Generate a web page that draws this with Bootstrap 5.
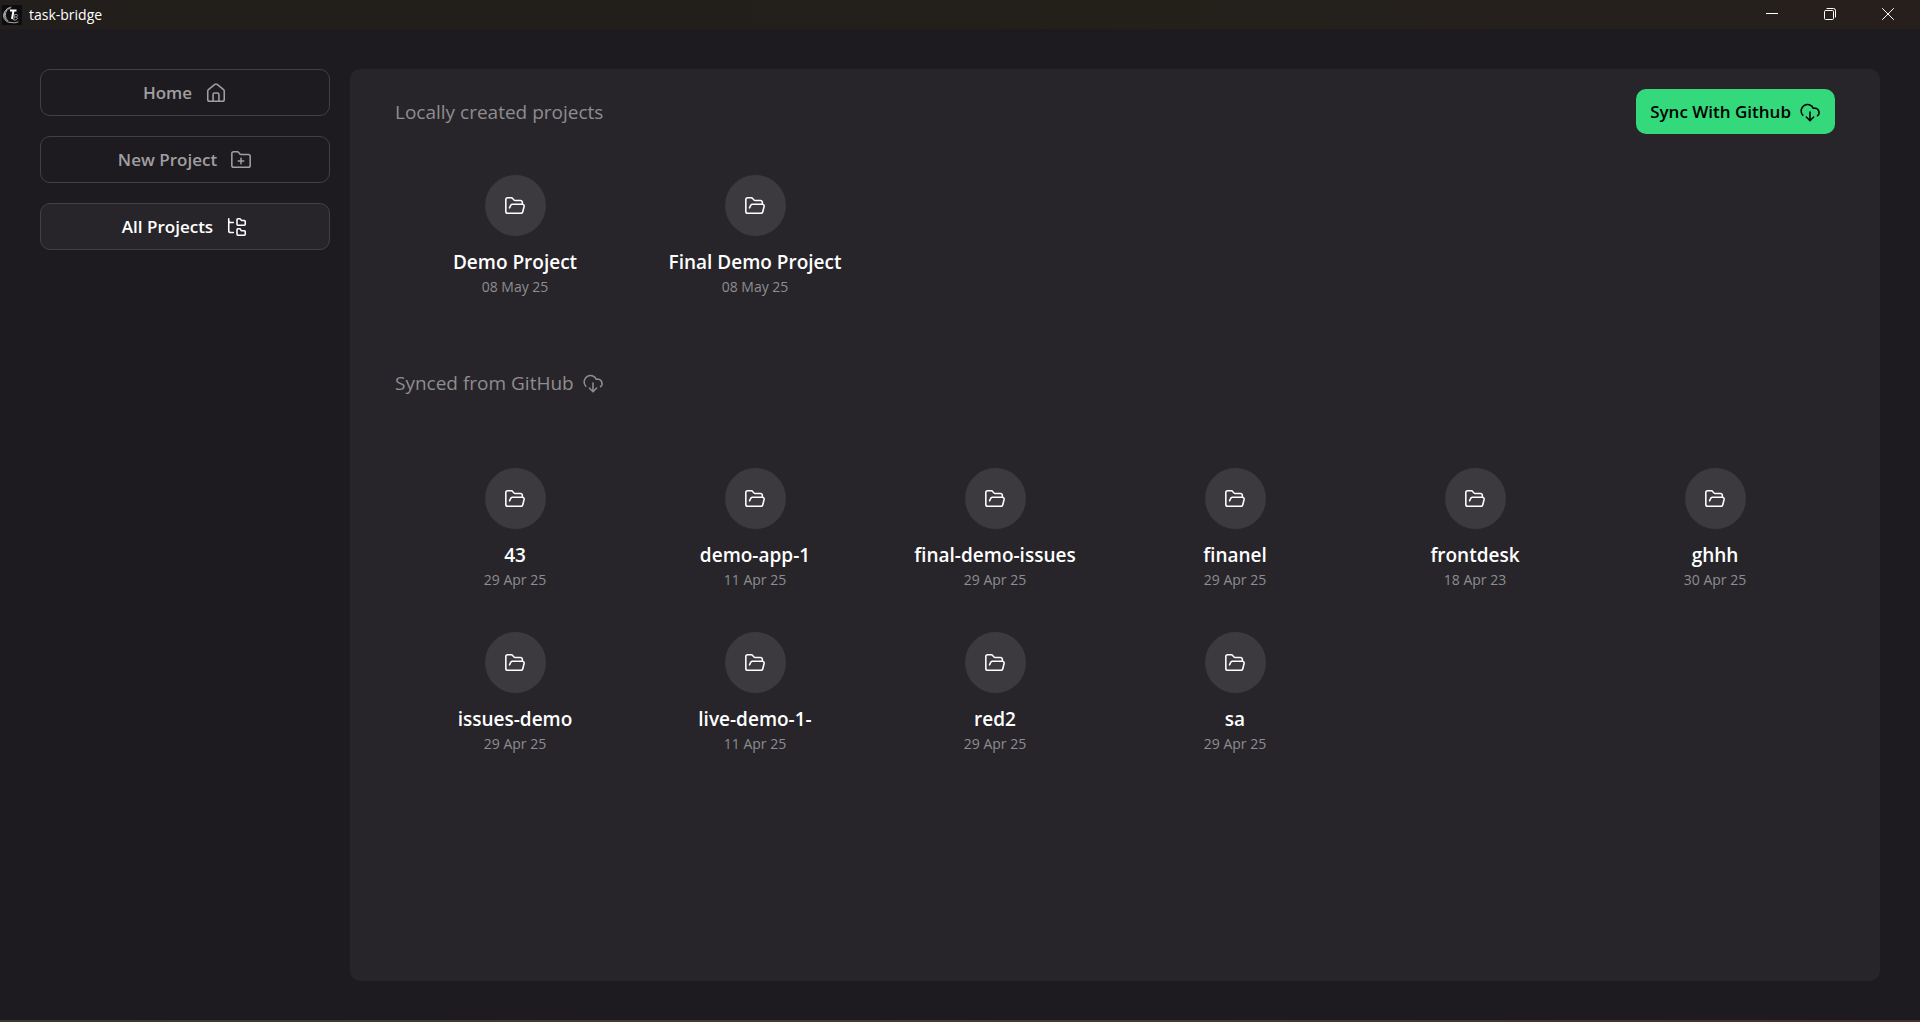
<!DOCTYPE html>
<html lang="en">
<head>
<meta charset="utf-8">
<meta name="viewport" content="width=device-width, initial-scale=1">
<title>task-bridge</title>
<link rel="stylesheet" href="https://cdn.jsdelivr.net/npm/bootstrap@5.3.0/dist/css/bootstrap.min.css">
<style>
  body { background: #1d1b1f; color: #fff; font-family: "Open Sans", "Noto Sans", sans-serif; }
  .titlebar { height: 29px; padding: 0 3px 0 2px; background: linear-gradient(90deg, #211e1b, #23201a 60%, #261f1c); font-size: 14px; line-height: 20px; }
  .app-name { margin-left: 7px; }
  .win-btn { width: 58px; height: 28px; background: none; border: 0; padding: 0; color: #fff; }
  .win-btn svg { stroke-width: 1; display: block; margin: 0 auto; }
  .workspace { padding: 40px 40px 39px; gap: 20px; }
  .sidebar { width: 290px; gap: 20px; }
  .side-link { height: 47px; border: 1px solid #424045; border-radius: 10px; color: #a09f9f; font-size: 17px; line-height: 24px; font-weight: 600; gap: 13px; text-decoration: none; }
  .side-link:hover { color: #fff; }
  .side-link.current { background: #27252a; color: #fff; }
  .panel { background: #27252a; border-radius: 10px; padding: 20px 45px; }
  .section-title { color: #8e8d8f; font-size: 19px; line-height: 28px; font-weight: 400; margin: 0; }
  .sync-btn { height: 45px; background: #33d97a; border: 0; border-radius: 10px; color: #000; font-size: 17px; line-height: 24px; font-weight: 600; padding: 0 14px; gap: 8px; }
  .tiles { padding-top: 41px; row-gap: 42px; }
  .tile { color: #fff; text-decoration: none; }
  .disc { width: 61px; height: 61px; border-radius: 50%; background: #3c3a3f; margin-bottom: 12px; }
  .tile-name { font-size: 19px; line-height: 28px; font-weight: 600; }
  .tile-date { color: #8e8d8f; font-size: 14px; line-height: 21px; }
  .synced { padding-top: 72px; }
  .synced + .tiles { padding-top: 71px; }
  .base-line { height: 2px; background: linear-gradient(90deg, #3a3a2e, #4a3a34 50%, #4a2f2c); }
  svg { fill: none; stroke: currentColor; stroke-width: 1.7; stroke-linecap: round; stroke-linejoin: round; flex: none; }
</style>
<script src="https://cdn.jsdelivr.net/npm/bootstrap@5.3.0/dist/js/bootstrap.bundle.min.js"></script>
</head>
<body>
<svg class="d-none" aria-hidden="true">
  <symbol id="i-home" viewBox="0 0 24 24"><path d="M3 9.800a2 2 0 0 1 .75-1.560L10.750 2.700a2 2 0 0 1 2.500 0l7 5.540A2 2 0 0 1 21 9.800V19a2 2 0 0 1-2 2H5a2 2 0 0 1-2-2z"/><path d="M8.800 21v-7.500a1.500 1.500 0 0 1 1.500-1.500h3.400a1.500 1.500 0 0 1 1.500 1.500V21"/></symbol>
  <symbol id="i-plus" viewBox="0 0 24 24"><path d="M12 10v6M9 13h6"/><path d="M20 20a2 2 0 0 0 2-2V8a2 2 0 0 0-2-2h-7.900a2 2 0 0 1-1.690-.9L9.600 3.900A2 2 0 0 0 7.930 3H4a2 2 0 0 0-2 2v13a2 2 0 0 0 2 2Z"/></symbol>
  <symbol id="i-tree" viewBox="0 0 24 24"><path d="M20 10a1 1 0 0 0 1-1V6a1 1 0 0 0-1-1h-2.500a1 1 0 0 1-.8-.4l-.9-1.200A1 1 0 0 0 15 3h-2a1 1 0 0 0-1 1v5a1 1 0 0 0 1 1Z"/><path d="M20 21a1 1 0 0 0 1-1v-3a1 1 0 0 0-1-1h-2.900a1 1 0 0 1-.88-.55l-.42-.85a1 1 0 0 0-.92-.6H13a1 1 0 0 0-1 1v5a1 1 0 0 0 1 1Z"/><path d="M3 5a2 2 0 0 0 2 2h3M3 3v13a2 2 0 0 0 2 2h3"/></symbol>
  <symbol id="i-open" viewBox="0 0 24 24"><path d="m6 14 1.450-2.900A2 2 0 0 1 9.240 10H20a2 2 0 0 1 1.940 2.500l-1.550 6a2 2 0 0 1-1.940 1.500H4a2 2 0 0 1-2-2V5c0-1.100.9-2 2-2h3.930a2 2 0 0 1 1.660.9l.82 1.200a2 2 0 0 0 1.660.9H18a2 2 0 0 1 2 2v2"/></symbol>
  <symbol id="i-cloud" viewBox="0 0 24 24"><path d="M4.200 15.600A7 7 0 1 1 15.710 8h1.790a4.500 4.500 0 0 1 2.700 8"/><path d="M12 12v9M8 17.500l4 4 4-4"/></symbol>
</svg>
<div class="d-flex flex-column min-vh-100">
  <header class="titlebar d-flex align-items-center">
    <svg width="20" height="20" viewBox="0 0 20 20"><rect width="20" height="20" fill="#0d0d0f" stroke="none"/><path d="M9 2A8 8 0 0 0 4 15M8 3.500A7 7 0 0 0 9 17.500q4 1 7-.5M5 5Q1 11 6 16" stroke="#aaa" stroke-width="1"/><path d="M8 5.500h6.500M11.500 5.500 10 14" stroke="#fff" stroke-width="2" stroke-linecap="butt"/><path d="M13 9.500h2q2 1.200-.5 2.500 2.500 1-.5 3h-2zM12.500 12h2" stroke="#999" stroke-width="1"/></svg>
    <span class="app-name">task-bridge</span>
    <div class="ms-auto d-flex align-self-start">
      <button class="win-btn" type="button" aria-label="Minimize"><svg width="12" height="12" viewBox="0 0 12 12"><path d="M0 5.500h12"/></svg></button>
      <button class="win-btn" type="button" aria-label="Restore"><svg width="12" height="12" viewBox="0 0 12 12"><rect x=".5" y="2.500" width="9" height="9" rx="1"/><path d="M3 .5h6.500a2 2 0 0 1 2 2V9"/></svg></button>
      <button class="win-btn" type="button" aria-label="Close"><svg width="12" height="12" viewBox="0 0 12 12"><path d="M.5.5l11 11M11.500.5l-11 11"/></svg></button>
    </div>
  </header>
  <div class="workspace d-flex flex-grow-1">
    <nav class="sidebar d-flex flex-column flex-shrink-0" aria-label="Main">
      <a class="side-link d-flex align-items-center justify-content-center" href="#">Home <svg width="22" height="22"><use href="#i-home"/></svg></a>
      <a class="side-link d-flex align-items-center justify-content-center" href="#">New Project <svg width="22" height="22"><use href="#i-plus"/></svg></a>
      <a class="side-link current d-flex align-items-center justify-content-center" href="#" aria-current="page">All Projects <svg width="22" height="22"><use href="#i-tree"/></svg></a>
    </nav>
    <main class="panel flex-grow-1">
      <div class="d-flex align-items-center justify-content-between">
        <h2 class="section-title">Locally created projects</h2>
        <button class="sync-btn d-flex align-items-center" type="button">Sync With Github <svg width="22" height="22"><use href="#i-cloud"/></svg></button>
      </div>
      <div class="tiles row g-0" id="local"></div>
      <h2 class="section-title synced d-flex align-items-center gap-2">Synced from GitHub <svg width="22" height="22"><use href="#i-cloud"/></svg></h2>
      <div class="tiles row g-0" id="remote"></div>
    </main>
  </div>
  <div class="base-line"></div>
</div>
<script>
  const fill = (id, items) => {
    document.getElementById(id).innerHTML = items.map(([name, date]) =>
      `<div class="col-2"><a class="tile d-flex flex-column align-items-center" href="#">
        <span class="disc d-flex align-items-center justify-content-center"><svg width="22" height="22"><use href="#i-open"/></svg></span>
        <span class="tile-name">${name}</span><span class="tile-date">${date}</span></a></div>`).join('');
  };
  fill('local', [['Demo Project', '08 May 25'], ['Final Demo Project', '08 May 25']]);
  fill('remote', [['43', '29 Apr 25'], ['demo-app-1', '11 Apr 25'], ['final-demo-issues', '29 Apr 25'],
    ['finanel', '29 Apr 25'], ['frontdesk', '18 Apr 23'], ['ghhh', '30 Apr 25'],
    ['issues-demo', '29 Apr 25'], ['live-demo-1-', '11 Apr 25'], ['red2', '29 Apr 25'], ['sa', '29 Apr 25']]);
</script>
</body>
</html>
